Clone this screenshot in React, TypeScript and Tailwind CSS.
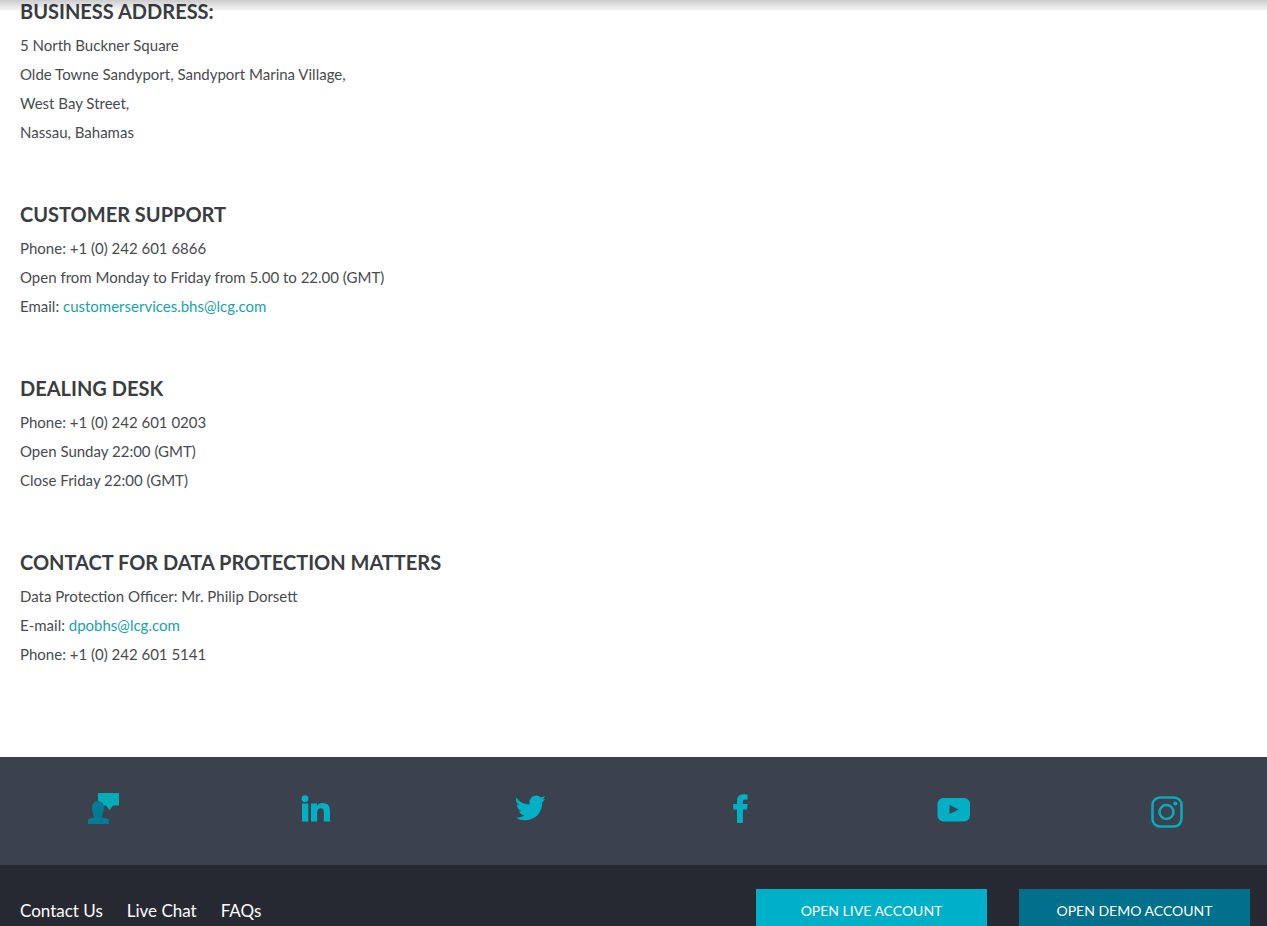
import type { ReactNode } from 'react'

const Section = ({ title, children }: { title: string; children: ReactNode }) => (
  <section>
    <h2 className="mb-2 text-xl leading-[23px] font-bold uppercase text-[#3a3d41]">{title}</h2>
    <div className="text-[15px] leading-[29px] text-[#484b4f]">{children}</div>
  </section>
)

const MailLink = ({ address }: { address: string }) => (
  <a href={`mailto:${address}`} className="text-[#18a4a9] hover:underline">{address}</a>
)

const socials = [
  {
    label: 'Contact',
    icon: (
      <>
        <path d="M16 2H37V14.500H31L27.500 19L24 14.500H16Z" fill="#06acb8" />
        <path d="M6 33V29C6 27.500 9 27 12 26.500C12.500 25 10 21 10 17C10 12.500 12 10.500 16 10C20 10.500 22 12.500 22 17C22 21 19.500 25 20 26.500C23 27 27 27.500 27 29V33Z" fill="#037b95" />
      </>
    ),
  },
  {
    label: 'LinkedIn',
    icon: (
      <>
        <circle cx="10" cy="7.700" r="3.400" />
        <path d="M7 12.500H13.300V30.500H7ZM16 12.500H22V15C23 13.200 25 12 27.700 12C33.200 12 35 15.500 35 20.500V30.500H28.800V21.500C28.800 18.800 28 17.200 25.800 17.200C23.300 17.200 22.200 19 22.200 21.700V30.500H16Z" />
      </>
    ),
  },
  {
    label: 'Twitter',
    icon: (
      <path d="M9.500 6.500C12 11 16.500 13 22.500 13.500C21.500 8.500 25 4.500 29 4.500C31 4.500 32.700 5.300 34 6.500C35.500 6.200 36.500 5.500 37.800 5C37.300 6.800 36.500 7.800 35.500 8.500L38 8C37.300 9.500 36.300 10.500 35.200 11.500C35.500 21 28.500 29.300 18 29.300C14.500 29.300 11.500 28.500 9 26.800C12.500 27 15 26 17.500 24.300C15 24 12.800 22.500 12 20.200L14.500 20C11.500 18.800 9.800 16.500 9.800 13.500L12.200 14.200C9.300 12 8.300 9.500 9.500 6.500Z" />
    ),
  },
  {
    label: 'Facebook',
    icon: <path d="M17 32V18.500H13.200V13H17V10.500C17 5.700 19.300 3.300 23.800 3.300C25.500 3.300 26.800 3.500 27.600 3.700V8.400H25.500C23.500 8.400 22.900 9.200 22.900 11V13H27.600L27 18.500H22.900V32Z" />,
  },
  {
    label: 'YouTube',
    icon: (
      <>
        <rect x="5.500" y="7" width="32.500" height="23.500" rx="6" />
        <path d="M17.500 14L27 18.500L17.500 23Z" fill="#2f4958" />
      </>
    ),
  },
  {
    label: 'Instagram',
    icon: (
      <>
        <rect x="7.500" y="6.500" width="29" height="29" rx="7.500" fill="none" stroke="#0aa9bb" strokeWidth="2.600" />
        <circle cx="21.500" cy="21" r="7" fill="none" stroke="#0aa9bb" strokeWidth="2.600" />
        <circle cx="30.300" cy="12.500" r="2" />
      </>
    ),
  },
]

const navLinks = ['Contact Us', 'Live Chat', 'FAQs']

export default function App() {
  return (
    <div className="flex flex-col bg-white font-[Lato,sans-serif]">
      {/* Shadow cast by the header */}
      <div className="pointer-events-none fixed inset-x-0 top-0 h-3 bg-linear-to-b from-black/20 to-transparent" />

      <main className="flex flex-col gap-14 px-5 pb-[88px]">
        <Section title="Business Address:">
          <p>5 North Buckner Square</p>
          <p>Olde Towne Sandyport, Sandyport Marina Village,</p>
          <p>West Bay Street,</p>
          <p>Nassau, Bahamas</p>
        </Section>
        <Section title="Customer Support">
          <p>Phone: +1 (0) 242 601 6866</p>
          <p>Open from Monday to Friday from 5.00 to 22.00 (GMT)</p>
          <p>Email: <MailLink address="customerservices.bhs@lcg.com" /></p>
        </Section>
        <Section title="Dealing Desk">
          <p>Phone: +1 (0) 242 601 0203</p>
          <p>Open Sunday 22:00 (GMT)</p>
          <p>Close Friday 22:00 (GMT)</p>
        </Section>
        <Section title="Contact for data protection matters">
          <p>Data Protection Officer: Mr. Philip Dorsett</p>
          <p>E-mail: <MailLink address="dpobhs@lcg.com" /></p>
          <p>Phone: +1 (0) 242 601 5141</p>
        </Section>
      </main>

      <footer>
        {/* Social links */}
        <div className="flex items-center justify-between bg-[#3b424d] px-[82px] py-[34px]">
          {socials.map(({ label, icon }) => (
            <a key={label} href="#" aria-label={label}>
              <svg viewBox="0 0 40 40" className="size-10 fill-[#02afc5]">{icon}</svg>
            </a>
          ))}
        </div>

        {/* Bottom bar */}
        <div className="flex items-center justify-between bg-[#272932] py-6 pr-[17px] pl-5 text-white">
          <nav className="flex gap-6 text-[17px]">
            {navLinks.map((link) => (
              <a key={link} href="#" className="hover:underline">{link}</a>
            ))}
          </nav>
          <div className="flex gap-8 text-sm">
            <button type="button" className="h-11 w-[231px] bg-[#00afc8] uppercase">Open live account</button>
            <button type="button" className="h-11 w-[231px] bg-[#00708c] uppercase">Open demo account</button>
          </div>
        </div>
      </footer>
    </div>
  )
}
